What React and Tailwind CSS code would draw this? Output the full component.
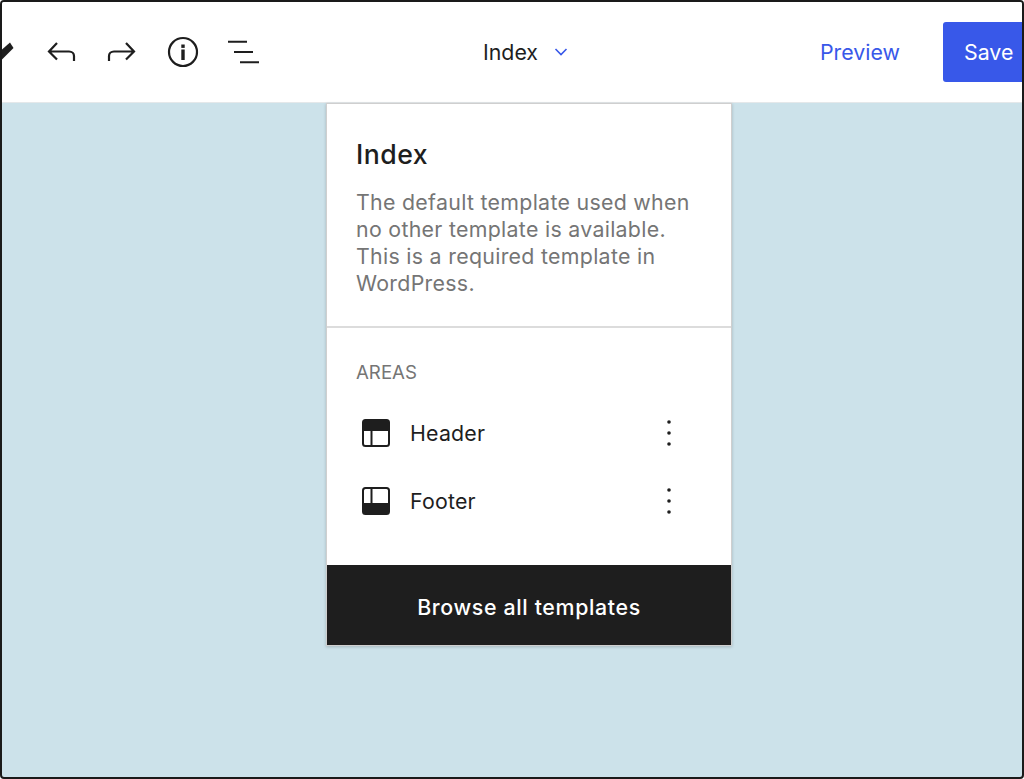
import React from 'react';

function TemplateIcon({ filled }) {
  return (
    <svg width="28" height="28" viewBox="0 0 28 28" fill="none" className="shrink-0 mb-[2px]">
      <rect x="1" y="1" width="26" height="26" rx="2.5" stroke="#1e1e1e" strokeWidth="2" />
      {filled === 'top' ? (
        <>
          <rect x="1" y="1" width="26" height="11" fill="#1e1e1e" />
          <path d="M9.5 12V27" stroke="#1e1e1e" strokeWidth="2" />
        </>
      ) : (
        <>
          <rect x="1" y="16" width="26" height="11" fill="#1e1e1e" />
          <path d="M9.5 1V16" stroke="#1e1e1e" strokeWidth="2" />
        </>
      )}
    </svg>
  );
}

function Kebab() {
  return (
    <svg width="6" height="28" viewBox="0 0 6 28" className="shrink-0 mb-[2px]">
      <circle cx="3" cy="3" r="1.8" fill="#1e1e1e" />
      <circle cx="3" cy="14" r="1.8" fill="#1e1e1e" />
      <circle cx="3" cy="25" r="1.8" fill="#1e1e1e" />
    </svg>
  );
}

export default function App() {
  const areas = [
    { name: 'Header', filled: 'top' },
    { name: 'Footer', filled: 'bottom' },
  ];

  return (
    <div className="w-[1024px] h-[779px] bg-white font-['Inter',sans-serif]">
      <div className="w-full h-full flex flex-col overflow-hidden border-2 border-[#1a1a1a] rounded-[4px] bg-[#cce2ea]">
        {/* Top toolbar */}
        <div className="h-[101px] shrink-0 bg-white flex items-center overflow-hidden border-b border-[#e4e8ea]">
          <svg width="14" height="24" viewBox="0 0 14 24" className="shrink-0">
            <path d="M0 9.5L8 2.5L11.5 8L0 19.5Z" fill="#1e1e1e" />
          </svg>
          <svg width="30" height="24" viewBox="0 0 30 24" fill="none" className="ml-[30px] shrink-0">
            <path d="M11 3L3 11.5L11 19.5M3 11.5H23C26 11.5 28 13.5 28 16V21" stroke="#1e1e1e" strokeWidth="2.2" />
          </svg>
          <svg width="30" height="24" viewBox="0 0 30 24" fill="none" className="ml-[31px] shrink-0">
            <path d="M19 3L27 11.5L19 19.5M27 11.5H7C4 11.5 2 13.5 2 16V21" stroke="#1e1e1e" strokeWidth="2.2" />
          </svg>
          <svg width="32" height="32" viewBox="0 0 32 32" fill="none" className="ml-[30px] shrink-0">
            <circle cx="16" cy="16" r="14" stroke="#1e1e1e" strokeWidth="2.2" />
            <rect x="14.3" y="8.5" width="3.4" height="3.4" fill="#1e1e1e" />
            <rect x="14.3" y="13.5" width="3.4" height="10.5" fill="#1e1e1e" />
          </svg>
          <svg width="32" height="24" viewBox="0 0 32 24" fill="none" className="ml-[29px] shrink-0">
            <path d="M0 1.7H19M6 12H25M12 22.3H31" stroke="#1e1e1e" strokeWidth="2" />
          </svg>
          <div className="ml-[223px] flex items-center text-[21.33px] text-[#1e1e1e] shrink-0">
            <span className="pt-[2px]">Index</span>
            <svg width="16" height="10" viewBox="0 0 16 10" fill="none" className="ml-[15px]">
              <path d="M2.5 2L8 7.5L13.5 2" stroke="#3858e9" strokeWidth="1.6" />
            </svg>
          </div>
          <span className="ml-[251px] pt-[2px] text-[21.33px] text-[#3858e9] shrink-0">Preview</span>
          <div className="ml-[43px] h-[60px] w-[110px] pl-[21px] pt-[1px] shrink-0 flex items-center rounded-[3px] bg-[#3858e9] text-[21.33px] text-white">
            Save
          </div>
        </div>

        {/* Template details panel */}
        <div className="ml-[324px] w-[406px] flex flex-col bg-white border border-[#cfcfcf] shadow-[0_1px_3px_rgba(0,0,0,0.2)]">
          <div className="h-[224px] px-[29px] pt-[31px] border-b-2 border-[#dcdcdc]">
            <h1 className="text-[26.67px] leading-[38px] font-medium tracking-[0.5px] text-[#1e1e1e]">Index</h1>
            <p className="mt-[16px] text-[21.33px] leading-[27px] tracking-[0.3px] text-[#757575]">
              The default template used when no other template is available. This is a required template in WordPress.
            </p>
          </div>
          <div className="h-[237px] px-[29px] pt-[34px]">
            <div className="text-[18.67px] leading-[22px] text-[#757575]">AREAS</div>
            <div className="mt-[36px] flex flex-col gap-[40px]">
              {areas.map((area) => (
                <div key={area.name} className="h-[28px] flex items-center pl-[6px] pr-[30px]">
                  <TemplateIcon filled={area.filled} />
                  <span className="ml-[20px] flex-1 text-[21.33px] tracking-[0.2px] text-[#1e1e1e]">{area.name}</span>
                  <Kebab />
                </div>
              ))}
            </div>
          </div>
          <div className="h-[80px] pt-[5px] flex items-center justify-center bg-[#1e1e1e] text-[21.33px] tracking-[0.65px] font-medium text-white">
            Browse all templates
          </div>
        </div>
      </div>
    </div>
  );
}
